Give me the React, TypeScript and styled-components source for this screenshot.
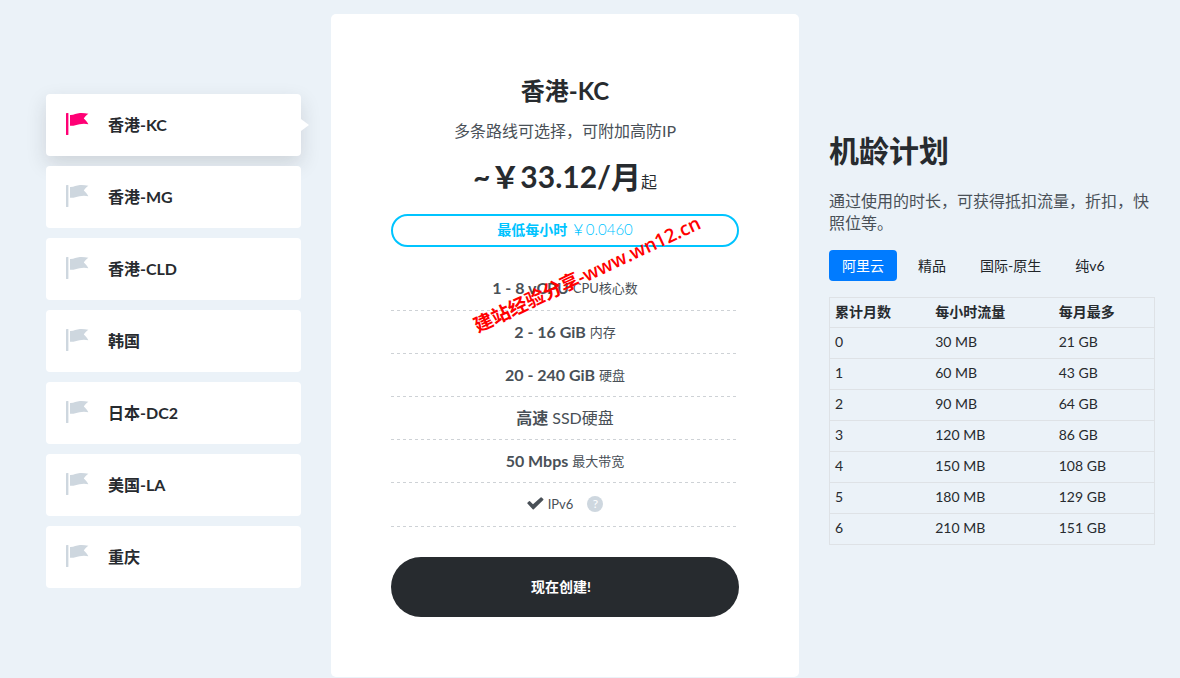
import React, { useState } from "react";
import styled, { createGlobalStyle } from "styled-components";

const GlobalStyle = createGlobalStyle`
  *, *::before, *::after { box-sizing: border-box; }
  body {
    margin: 0;
    background: #ebf2f8;
    color: #272b2f;
    font-family: Lato, "Noto Sans CJK SC", sans-serif;
    font-size: 16px;
    line-height: 22px;
  }
  button { font-family: inherit; cursor: pointer; }
`;

const Page = styled.main`
  position: relative;
  display: grid;
  grid-template-columns: 255fr 468fr 326fr;
  column-gap: 30px;
  align-items: center;
  max-width: 1240px;
  margin: 0 auto;
  padding: 14px 25px 1px 46px;
`;

const RegionList = styled.nav`
  display: flex;
  flex-direction: column;
  gap: 10px;
  padding-bottom: 10px;
`;

const RegionButton = styled.button<{ $active: boolean }>`
  position: relative;
  display: flex;
  align-items: center;
  gap: 18px;
  width: 100%;
  height: 62px;
  padding: 0 20px 2px;
  border: 0;
  border-radius: 4px;
  background: #fff;
  color: #272b2f;
  font-size: 16px;
  font-weight: 700;
  text-align: left;
  box-shadow: ${(p) => (p.$active ? "0 8px 20px rgba(39, 43, 47, 0.15)" : "none")};
  z-index: ${(p) => (p.$active ? 0 : 1)};

  & > svg { color: ${(p) => (p.$active ? "#ff0075" : "#ced7df")}; }

  &::after {
    content: "";
    display: ${(p) => (p.$active ? "block" : "none")};
    position: absolute;
    left: 100%;
    top: 50%;
    margin-top: -6px;
    border: 6px solid transparent;
    border-left: 8px solid #fff;
    border-right: 0;
  }
`;

const PlanCard = styled.section`
  position: relative;
  display: flex;
  flex-direction: column;
  padding: 60px;
  border-radius: 5px;
  background: #fff;
  text-align: center;
`;

const PlanTitle = styled.h2`
  margin: 0;
  font-size: 24px;
  line-height: 34px;
  font-weight: 700;
`;

const PlanText = styled.p`
  margin: 12px 0 0;
  color: #495057;
`;

const Price = styled.p`
  margin: 12px 0 0;
  line-height: 44px;

  strong { font-size: 30px; }
`;

const HourlyRate = styled.div`
  margin-top: 10px;
  padding: 3px 4px 5px;
  border: 2px solid #00c4ff;
  border-radius: 17px;
  color: #00c4ff;
  font-size: 14px;
  line-height: 21px;

  span { font-weight: 300; font-size: 15px; }
`;

const FeatureList = styled.ul`
  margin: 20px 0 30px;
  padding: 0;
  list-style: none;
  color: #495057;
`;

const Feature = styled.li<{ $large?: boolean }>`
  display: flex;
  align-items: center;
  justify-content: center;
  gap: 4px;
  height: 43px;
  padding-bottom: 2px;
  background: repeating-linear-gradient(90deg, #ced2d6 0 3px, transparent 3px 6px) bottom / 100% 1px no-repeat;

  &:first-child, &:last-child { height: 44px; }

  span { font-size: ${(p) => (p.$large ? 16 : 13)}px; }
`;

const HelpButton = styled.button`
  width: 16px;
  height: 16px;
  margin-left: 10px;
  padding: 0;
  border: 0;
  border-radius: 50%;
  background: #ced7df;
  color: #fff;
  font-size: 12px;
  line-height: 16px;
`;

const CreateButton = styled.button`
  height: 60px;
  padding: 0 14px 2px 6px;
  border: 0;
  border-radius: 30px;
  background: #272b2f;
  color: #fff;
  font-size: 14px;
  font-weight: 700;
`;

const Watermark = styled.span`
  position: absolute;
  left: 50%;
  top: 260px;
  transform: translate(-50%, -50%) translateX(22px) rotate(-25deg);
  color: #f00;
  font-family: "Open Sans", "Noto Sans CJK SC", sans-serif;
  font-size: 19px;
  font-weight: 600;
  white-space: nowrap;
  pointer-events: none;
`;

const AgeSection = styled.section`
  padding-bottom: 16px;
`;

const AgeTitle = styled.h2`
  margin: 0 0 20px;
  font-size: 30px;
  line-height: 40px;
  font-weight: 700;
`;

const AgeText = styled.p`
  margin: 0 0 16px;
  color: #495057;
`;

const Tabs = styled.div`
  display: flex;
  gap: 8px;
  margin-bottom: 16px;
`;

const Tab = styled.button<{ $active: boolean }>`
  height: 31px;
  padding: 0 13px 2px;
  border: 0;
  border-radius: 4px;
  background: ${(p) => (p.$active ? "#007bff" : "transparent")};
  color: ${(p) => (p.$active ? "#fff" : "#212529")};
  font-size: 14px;
`;

const AgeTable = styled.table`
  width: 100%;
  border: 1px solid #dee2e6;
  border-collapse: collapse;
  table-layout: fixed;
  font-size: 14px;

  th, td {
    height: 31px;
    padding: 0 5px 2px;
    border-top: 1px solid #dee2e6;
    text-align: left;
  }
  th { height: 30px; }
  th:nth-child(1) { width: 31%; }
  th:nth-child(2) { width: 38%; }
`;

const FlagIcon = () => (
  <svg width="24" height="24" viewBox="0 0 24 24" fill="currentColor" aria-hidden="true">
    <rect x="0" y="1" width="2.4" height="22" rx="0.6" />
    <path d="M4 3 C8 3.2 10 1.4 14 1.1 C17 0.9 19.5 1.3 22.4 1.8 C20.5 3.2 18.8 4.7 17.8 6.6 C19.6 8 21 10 22.4 12.2 C19.5 11.6 16.5 11.5 13.5 12.3 C10 13.2 8 14 4 13.8 Z" />
  </svg>
);

const CheckIcon = () => (
  <svg width="17" height="14" viewBox="0 0 17 14" fill="currentColor" aria-hidden="true">
    <path d="M0.4 6.6 Q0 6.2 0.4 5.8 L2 4.2 Q2.5 3.8 3 4.2 L6 7.2 L13.6 0.4 Q14.1 0 14.6 0.4 L16.3 2.1 Q16.7 2.6 16.3 3 L6.8 12.2 Q6.2 12.7 5.7 12.2 Z" />
  </svg>
);

const regions = ["香港-KC", "香港-MG", "香港-CLD", "韩国", "日本-DC2", "美国-LA", "重庆"];
const plans = ["阿里云", "精品", "国际-原生", "纯v6"];
const rows = [
  ["0", "30 MB", "21 GB"],
  ["1", "60 MB", "43 GB"],
  ["2", "90 MB", "64 GB"],
  ["3", "120 MB", "86 GB"],
  ["4", "150 MB", "108 GB"],
  ["5", "180 MB", "129 GB"],
  ["6", "210 MB", "151 GB"],
];

export default function App() {
  const [region, setRegion] = useState(0);
  const [plan, setPlan] = useState(0);

  return (
    <>
      <GlobalStyle />
      <Page>
        <RegionList>
          {regions.map((name, i) => (
            <RegionButton key={name} type="button" $active={i === region} aria-pressed={i === region} onClick={() => setRegion(i)}>
              <FlagIcon />
              {name}
            </RegionButton>
          ))}
        </RegionList>

        <PlanCard>
          <PlanTitle>{regions[region]}</PlanTitle>
          <PlanText>多条路线可选择，可附加高防IP</PlanText>
          <Price><strong>~￥33.12/月</strong>起</Price>
          <HourlyRate><strong>最低每小时</strong> <span>￥0.0460</span></HourlyRate>
          <FeatureList>
            <Feature><strong>1 - 8 vCPU</strong><span>CPU核心数</span></Feature>
            <Feature><strong>2 - 16 GiB</strong><span>内存</span></Feature>
            <Feature><strong>20 - 240 GiB</strong><span>硬盘</span></Feature>
            <Feature $large><strong>高速</strong><span>SSD硬盘</span></Feature>
            <Feature><strong>50 Mbps</strong><span>最大带宽</span></Feature>
            <Feature>
              <CheckIcon />
              <span>IPv6</span>
              <HelpButton type="button">?</HelpButton>
            </Feature>
          </FeatureList>
          <CreateButton type="button">现在创建!</CreateButton>
          <Watermark>建站经验分享-www.wn12.cn</Watermark>
        </PlanCard>

        <AgeSection>
          <AgeTitle>机龄计划</AgeTitle>
          <AgeText>通过使用的时长，可获得抵扣流量，折扣，快照位等。</AgeText>
          <Tabs role="tablist">
            {plans.map((name, i) => (
              <Tab key={name} type="button" role="tab" $active={i === plan} aria-selected={i === plan} onClick={() => setPlan(i)}>
                {name}
              </Tab>
            ))}
          </Tabs>
          <AgeTable>
            <thead>
              <tr><th>累计月数</th><th>每小时流量</th><th>每月最多</th></tr>
            </thead>
            <tbody>
              {rows.map((cells) => (
                <tr key={cells[0]}>{cells.map((cell) => <td key={cell}>{cell}</td>)}</tr>
              ))}
            </tbody>
          </AgeTable>
        </AgeSection>
      </Page>
    </>
  );
}
